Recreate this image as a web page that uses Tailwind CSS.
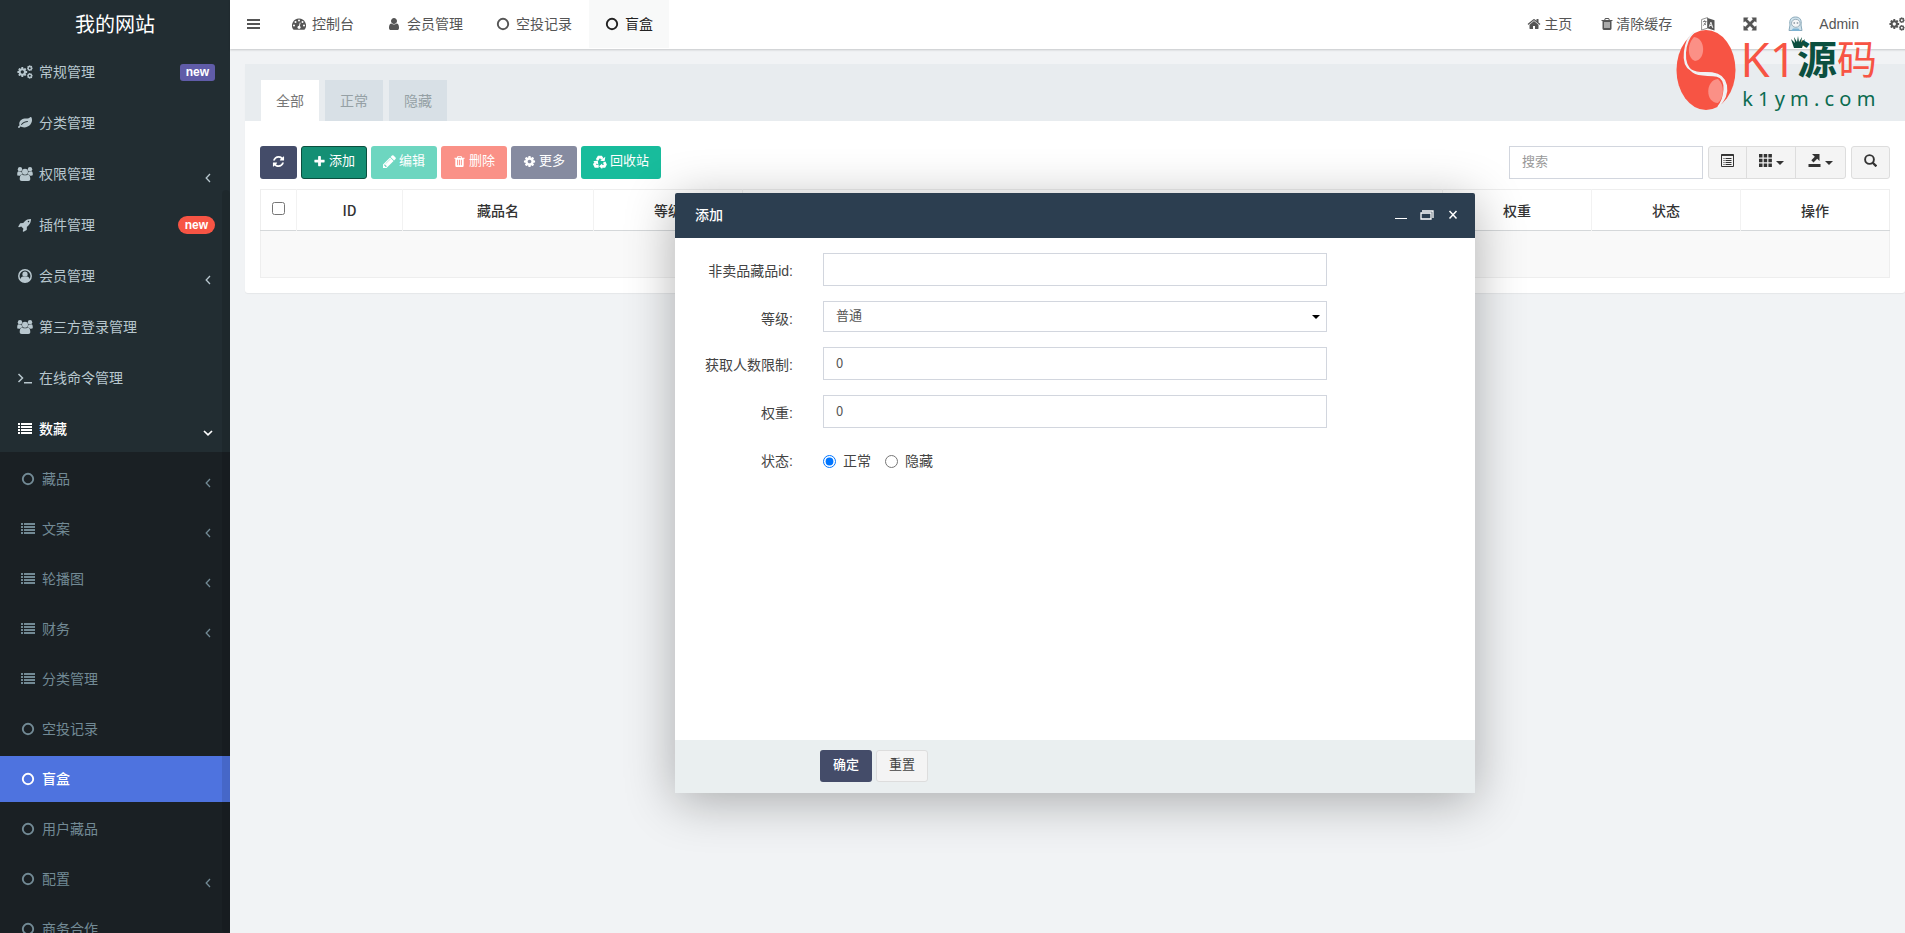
<!DOCTYPE html>
<html lang="zh-CN">
<head>
<meta charset="utf-8">
<title>我的网站</title>
<script src="https://cdn.jsdelivr.net/npm/@tailwindcss/browser@4"></script>
</head>
<body class="relative flex h-screen overflow-hidden bg-[#f1f3f5] font-['Liberation_Sans','Noto_Sans_CJK_SC',sans-serif] text-sm text-[#444]">

<svg class="hidden" aria-hidden="true">
  <symbol id="cog" viewBox="0 0 1792 1792"><path d="M1152 896q0-106-75-181t-181-75-181 75-75 181 75 181 181 75 181-75 75-181zm512-109v222q0 12-8 23t-20 13l-185 28q-19 54-39 91 35 50 107 138 10 12 10 25t-9 23q-27 37-99 108t-94 71q-12 0-26-9l-138-108q-44 23-91 38-16 136-29 186-7 28-36 28h-222q-14 0-24.5-8.5t-11.5-21.5l-28-184q-49-16-90-37l-141 107q-10 9-25 9-14 0-25-11-126-114-165-168-7-10-7-23 0-12 8-23 15-21 51-66.5t54-70.5q-27-50-41-99l-183-27q-13-2-21-12.5t-8-23.5v-222q0-12 8-23t19-13l186-28q14-46 39-92-40-57-107-138-10-12-10-24 0-10 9-23 26-36 98.5-107.5t94.5-71.5q13 0 26 10l138 107q44-23 91-38 16-136 29-186 7-28 36-28h222q14 0 24.5 8.5t11.5 21.5l28 184q49 16 90 37l142-107q9-9 24-9 13 0 25 10 129 119 165 170 7 8 7 22 0 12-8 23-15 21-51 66.5t-54 70.5q26 50 41 98l183 28q13 2 21 12.5t8 23.5z"/></symbol>
  <symbol id="cogs" viewBox="0 0 16 14"><use href="#cog" x="-.4" y="1.3" width="11.4" height="11.4"/><use href="#cog" x="9.4" y="-.2" width="6.8" height="6.8"/><use href="#cog" x="9.4" y="7.4" width="6.8" height="6.8"/></symbol>
  <symbol id="leaf" viewBox="0 0 1792 1792"><path d="M1280 704q0-26-19-45t-45-19q-172 0-318 49.5t-259.5 134-235.5 219.5q-19 21-19 45 0 26 19 45t45 19q24 0 45-19 27-24 74-71t67-66q137-124 268.5-176t313.5-52q26 0 45-19t19-45zm512-198q0 95-20 193-46 224-184.5 383t-357.5 268q-214 108-438 108-148 0-286-47-15-5-88-42t-96-37q-16 0-39.5 32t-45 70-52.5 70-60 32q-43 0-63.5-17.5t-45.5-59.5q-2-4-6-11t-5.5-10-3-9.5-1.5-13.5q0-35 31-73.5t68-65.5 68-56 31-48q0-4-14-38t-16-44q-9-51-9-104 0-115 43.5-220t119-184.5 170.5-139 204-95.5q55-18 145-25.5t179.5-9 178.5-6 163.5-24 113.5-56.5l29.5-29.5 29.5-28 27-20 36.5-16 43.5-4.5q39 0 70.5 46t47.5 112 24 124 8 96z"/></symbol>
  <symbol id="group" viewBox="0 0 16 14"><circle cx="3" cy="2.3" r="2.2"/><circle cx="13" cy="2.3" r="2.2"/><path d="M.2 7.6C.2 5.4.8 4.300 1.500 4.300c.9.5 2.200.6 3.100.2 0 1.200.3 2 .9 2.800-1.300.1-2.100.6-2.700 1.500H1.700C.8 8.800.2 8.400.2 7.600zM15.800 7.600c0-2.200-.6-3.300-1.300-3.300-.9.5-2.200.6-3.100.2 0 1.200-.3 2-.9 2.800 1.300.1 2.100.6 2.700 1.500h1.100c.9 0 1.500-.4 1.500-1.200z"/><circle cx="8" cy="4.800" r="3"/><path d="M2.700 12c0-2.800.9-4.600 2.500-4.600 1.700 1.200 3.900 1.200 5.600 0 1.600 0 2.500 1.800 2.500 4.600 0 1.300-.7 2-2 2H4.700c-1.300 0-2-.7-2-2z"/></symbol>
  <symbol id="rocket" viewBox="0 0 1792 1792"><path d="M1440 448q0-40-28-68t-68-28-68 28-28 68 28 68 68 28 68-28 28-68zm224-288q0 249-75.500 430.500t-253.500 360.500q-81 80-195 176l-20 379q-2 16-16 26l-384 224q-7 4-16 4-12 0-23-9l-64-64q-13-14-8-32l85-276-281-281-276 85q-3 1-9 1-14 0-23-9l-64-64q-17-19-5-39l224-384q10-14 26-16l379-20q96-114 176-195 188-187 358-258t431-71q14 0 24 9.500t10 22.500z"/></symbol>
  <symbol id="account" viewBox="0 0 14 14"><circle cx="7" cy="7" r="6.200" fill="none" stroke="currentColor" stroke-width="1.500"/><circle cx="7" cy="5.200" r="2.600"/><path d="M2 11.200c.5-2.500 1.500-3.600 3-3.800 1.200.8 2.800.8 4 0 1.500.2 2.500 1.300 3 3.800-3 2.600-7 2.600-10 0z"/></symbol>
  <symbol id="terminal" viewBox="0 0 16 14"><path d="M1.500 3l4 4-4 4M7 11.800h8" fill="none" stroke="currentColor" stroke-width="1.500"/></symbol>
  <symbol id="list" viewBox="0 0 14 12"><path d="M0 0h2v2H0zM3 0h11v2H3zM0 3h2v2H0zM3 3h11v2H3zM0 6h2v2H0zM3 6h11v2H3zM0 9h2v2H0zM3 9h11v2H3z"/></symbol>
  <symbol id="ring" viewBox="0 0 14 14"><circle cx="7" cy="7" r="5.200" fill="none" stroke="currentColor" stroke-width="1.900"/></symbol>
  <symbol id="left" viewBox="0 0 6 10"><path d="M5 1L1.200 5 5 9" fill="none" stroke="currentColor" stroke-width="1.300"/></symbol>
  <symbol id="down" viewBox="0 0 10 6"><path d="M1 1l4 3.800L9 1" fill="none" stroke="currentColor" stroke-width="1.700"/></symbol>
  <symbol id="trash" viewBox="0 0 1792 1792"><path d="M704 1376v-704q0-14-9-23t-23-9h-64q-14 0-23 9t-9 23v704q0 14 9 23t23 9h64q14 0 23-9t9-23zm256 0v-704q0-14-9-23t-23-9h-64q-14 0-23 9t-9 23v704q0 14 9 23t23 9h64q14 0 23-9t9-23zm256 0v-704q0-14-9-23t-23-9h-64q-14 0-23 9t-9 23v704q0 14 9 23t23 9h64q14 0 23-9t9-23zm-544-992h448l-48-117q-7-9-17-11h-317q-10 2-17 11zm928 32v64q0 14-9 23t-23 9h-96v948q0 83-47 143.500t-113 60.500h-832q-66 0-113-58.500t-47-141.500v-952h-96q-14 0-23-9t-9-23v-64q0-14 9-23t23-9h309l70-167q15-37 54-63t79-26h320q40 0 79 26t54 63l70 167h309q14 0 23 9t9 23z"/></symbol>
</svg>

<aside class="relative w-[230px] shrink-0 overflow-hidden bg-[#222d32] text-[#b8c7ce]">
  <a href="#" class="flex h-[49px] items-center justify-center text-xl text-white">我的网站</a>
  <nav>
    <ul class="flex flex-col gap-[5px]">
      <li><a href="#" class="flex h-[46px] items-center gap-[6px] pl-[17px] pr-[15px]"><svg class="h-[14px] w-4 fill-current"><use href="#cogs"/></svg>常规管理<span class="ml-auto rounded-[3px] bg-[#605ca8] px-[6px] text-xs leading-[17px] font-bold text-white">new</span></a></li>
      <li><a href="#" class="flex h-[46px] items-center gap-[6px] pl-[17px] pr-[15px]"><svg class="h-[14px] w-4 fill-current"><use href="#leaf"/></svg>分类管理</a></li>
      <li><a href="#" class="flex h-[46px] items-center gap-[6px] pl-[17px] pr-[19px]"><svg class="h-[14px] w-4 fill-current"><use href="#group"/></svg>权限管理<svg class="mt-2 ml-auto h-[10px] w-[6px]"><use href="#left"/></svg></a></li>
      <li><a href="#" class="flex h-[46px] items-center gap-[6px] pl-[17px] pr-[15px]"><svg class="h-[14px] w-4 fill-current"><use href="#rocket"/></svg>插件管理<span class="ml-auto rounded-full bg-[#f75444] px-[7px] text-xs leading-[18px] font-bold text-white">new</span></a></li>
      <li><a href="#" class="flex h-[46px] items-center gap-[6px] pl-[17px] pr-[19px]"><svg class="h-[14px] w-4 fill-current"><use href="#account"/></svg>会员管理<svg class="mt-2 ml-auto h-[10px] w-[6px]"><use href="#left"/></svg></a></li>
      <li><a href="#" class="flex h-[46px] items-center gap-[6px] pl-[17px]"><svg class="h-[14px] w-4 fill-current"><use href="#group"/></svg>第三方登录管理</a></li>
      <li><a href="#" class="flex h-[46px] items-center gap-[6px] pl-[17px]"><svg class="h-[14px] w-4"><use href="#terminal"/></svg>在线命令管理</a></li>
      <li>
        <a href="#" class="flex h-[46px] items-center gap-[6px] pl-[17px] pr-[17px] font-medium text-white"><svg class="h-[12px] w-4 fill-current"><use href="#list"/></svg>数藏<svg class="mt-2 ml-auto h-[6px] w-[10px]"><use href="#down"/></svg></a>
        <ul class="flex flex-col gap-1 bg-[#1a2024] pt-1 text-[#728a95]">
          <li><a href="#" class="flex h-[46px] items-center gap-[7px] pl-[21px] pr-[19px]"><svg class="size-[14px]"><use href="#ring"/></svg>藏品<svg class="mt-2 ml-auto h-[10px] w-[6px]"><use href="#left"/></svg></a></li>
          <li><a href="#" class="flex h-[46px] items-center gap-[7px] pl-[21px] pr-[19px]"><svg class="h-[12px] w-[14px] fill-current"><use href="#list"/></svg>文案<svg class="mt-2 ml-auto h-[10px] w-[6px]"><use href="#left"/></svg></a></li>
          <li><a href="#" class="flex h-[46px] items-center gap-[7px] pl-[21px] pr-[19px]"><svg class="h-[12px] w-[14px] fill-current"><use href="#list"/></svg>轮播图<svg class="mt-2 ml-auto h-[10px] w-[6px]"><use href="#left"/></svg></a></li>
          <li><a href="#" class="flex h-[46px] items-center gap-[7px] pl-[21px] pr-[19px]"><svg class="h-[12px] w-[14px] fill-current"><use href="#list"/></svg>财务<svg class="mt-2 ml-auto h-[10px] w-[6px]"><use href="#left"/></svg></a></li>
          <li><a href="#" class="flex h-[46px] items-center gap-[7px] pl-[21px]"><svg class="h-[12px] w-[14px] fill-current"><use href="#list"/></svg>分类管理</a></li>
          <li><a href="#" class="flex h-[46px] items-center gap-[7px] pl-[21px]"><svg class="size-[14px]"><use href="#ring"/></svg>空投记录</a></li>
          <li><a href="#" class="flex h-[46px] items-center gap-[7px] bg-[#4e73df] pl-[21px] font-medium text-white"><svg class="size-[14px]"><use href="#ring"/></svg>盲盒</a></li>
          <li><a href="#" class="flex h-[46px] items-center gap-[7px] pl-[21px]"><svg class="size-[14px]"><use href="#ring"/></svg>用户藏品</a></li>
          <li><a href="#" class="flex h-[46px] items-center gap-[7px] pl-[21px] pr-[19px]"><svg class="size-[14px]"><use href="#ring"/></svg>配置<svg class="mt-2 ml-auto h-[10px] w-[6px]"><use href="#left"/></svg></a></li>
          <li><a href="#" class="flex h-[46px] items-center gap-[7px] pl-[21px]"><svg class="size-[14px]"><use href="#ring"/></svg>商务合作</a></li>
        </ul>
      </li>
    </ul>
  </nav>
  <div class="absolute top-[190px] right-0 bottom-0 w-2 rounded bg-black/10"></div>
</aside>

<div class="relative -mr-[15px] flex min-w-0 flex-1 flex-col">
  <header class="flex h-[49px] shrink-0 bg-white pb-px text-[#555] shadow-[0_1px_2px_rgba(0,0,0,0.18)]">
    <button type="button" aria-label="菜单" class="flex w-[46px] items-center justify-center"><svg class="h-[10px] w-[13px] fill-current"><path d="M0 0h13v2H0zM0 4h13v2H0zM0 8h13v2H0z"/></svg></button>
    <nav class="flex gap-px">
      <a href="#" class="flex items-center gap-[6px] px-4"><svg class="size-[14px] fill-current" viewBox="0 0 14 14"><path fill-rule="evenodd" d="M7 1.500a7 7 0 0 0-5.900 10.800c.2.300.4.400.8.400h10.200c.4 0 .6-.1.8-.4A7 7 0 0 0 7 1.500zM2 7.500a1 1 0 1 1 0 2 1 1 0 0 1 0-2zM3.500 4a1 1 0 1 1 0 2 1 1 0 0 1 0-2zM7 2.500a1 1 0 1 1 0 2 1 1 0 0 1 0-2zM10.500 4a1 1 0 1 1 0 2 1 1 0 0 1 0-2zM12 7.500a1 1 0 1 1 0 2 1 1 0 0 1 0-2zM7.800 5.500l.8.200-.8 3.200a1.600 1.600 0 1 1-.8-.2z"/></svg>控制台</a>
      <a href="#" class="flex items-center gap-[6px] px-4"><svg class="size-[14px] fill-current" viewBox="0 0 1792 1792"><path d="M1536 1399q0 109-62.500 187t-150.500 78h-854q-88 0-150.500-78t-62.500-187q0-85 8.500-160.500t31.500-152 58.500-131 94-89 134.500-34.500q131 128 313 128t313-128q76 0 134.500 34.500t94 89 58.500 131 31.500 152 8.500 160.500zm-256-887q0 159-112.500 271.500t-271.500 112.500-271.500-112.500-112.500-271.500 112.500-271.500 271.500-112.500 271.500 112.500 112.500 271.500z"/></svg>会员管理</a>
      <a href="#" class="flex items-center gap-[6px] px-4"><svg class="size-[14px]"><use href="#ring"/></svg>空投记录</a>
      <a href="#" class="flex items-center gap-[6px] bg-[#f8f9f9] px-4 text-[#222]"><svg class="size-[14px]"><use href="#ring"/></svg>盲盒</a>
    </nav>
    <nav class="ml-auto flex">
      <a href="#" class="flex items-center gap-[3px] px-[14px]"><svg class="size-[14px] fill-current" viewBox="0 0 1792 1792"><path d="M1472 992v480q0 26-19 45t-45 19h-384v-384h-256v384h-384q-26 0-45-19t-19-45v-480q0-1 .5-3t.5-3l575-474 575 474q1 2 1 6zm223-69l-62 74q-8 9-21 11h-3q-13 0-21-7l-692-577-692 577q-12 8-24 7-13-2-21-11l-62-74q-8-10-7-23.500t11-21.500l719-599q32-26 76-26t76 26l244 204v-195q0-14 9-23t23-9h192q14 0 23 9t9 23v408l219 182q10 8 11 21.500t-7 23.500z"/></svg>主页</a>
      <a href="#" class="flex items-center gap-[2px] px-[14px]"><svg class="size-[14px] fill-current"><use href="#trash"/></svg>清除缓存</a>
      <a href="#" aria-label="语言" class="flex items-center px-[15px]"><svg class="size-[14px]" viewBox="0 0 14 14"><path d="M.6 2.500L6.500.600v10.600L.600 13z" fill="#fff" stroke="#777" stroke-width=".8"/><path d="M2 4.500h3.500M3.700 3.200v1.300M2.200 8.500c1.500-1 2.400-2.200 2.700-4M2.800 6l2.200 2" fill="none" stroke="#666" stroke-width=".8"/><path d="M6.500 1l7 2.200v10.300l-7-2.300z" fill="#555"/><path d="M8.200 9.800l1.700-4.600 1.900 5.700M8.900 8.300l2.100.6" fill="none" stroke="#fff" stroke-width=".9"/></svg></a>
      <a href="#" aria-label="全屏" class="flex items-center px-[13px]"><svg class="size-[14px] fill-current" viewBox="0 0 14 14"><path d="M.5.500h5L4.200 2.300 7 5l2.800-2.700L8.500.500h5v5l-1.800-1.300L9 7l2.700 2.800 1.800-1.300v5h-5l1.300-1.800L7 9l-2.800 2.700 1.300 1.800h-5v-5l1.800 1.300L5 7 2.300 4.200.500 5.500z"/></svg></a>
      <a href="#" class="flex items-center gap-4 pr-[15px] pl-[18px]"><svg class="h-[16px] w-[15px]" viewBox="0 0 15 16"><path d="M2 9C1 4 3 1 7.500 1S14 4 13 9l1 5.500H1z" fill="#cfe2ec" stroke="#8aa9ba"/><ellipse cx="7.800" cy="7.300" rx="4.300" ry="4" fill="#f4f6f7" stroke="#8fa6b3" stroke-width=".9"/><path d="M5.500 7h1.500M8.700 7h1.500" stroke="#567" stroke-width="1.200"/><path d="M3 15l2-2.500h5.500L12.500 15z" fill="#7db3d3"/></svg>Admin</a>
      <a href="#" aria-label="设置" class="flex items-center px-[15px]"><svg class="h-[14px] w-4 fill-current"><use href="#cogs"/></svg></a>
    </nav>
  </header>

  <main class="px-[15px] pt-[15px]">
    <section class="rounded-[3px] bg-white shadow-[0_1px_1px_rgba(0,0,0,0.05)]">
      <div class="flex h-[57px] items-end gap-[6px] bg-[#e8ecef] px-4" role="tablist">
        <button type="button" role="tab" class="h-[41px] bg-white px-[15px] text-[#777]">全部</button>
        <button type="button" role="tab" class="h-[41px] bg-[#d8e0e6] px-[15px] text-[#95a0a5]">正常</button>
        <button type="button" role="tab" class="h-[41px] bg-[#d8e0e6] px-[15px] text-[#95a0a5]">隐藏</button>
      </div>
      <div class="px-[15px] pt-[25px] pb-[15px]">
        <div class="flex h-[33px] gap-1 text-[13px] text-white">
          <button type="button" aria-label="刷新" class="flex w-[37px] items-center justify-center rounded-[3px] bg-[#444c69] pb-[2px]"><svg class="size-[13px] fill-current" viewBox="0 0 1792 1792"><path d="M1639 1056q0 5-1 7-64 268-268 434.500t-478 166.500q-146 0-282.500-55t-243.500-157l-129 129q-19 19-45 19t-45-19-19-45v-448q0-26 19-45t45-19h448q26 0 45 19t19 45-19 45l-137 137q71 66 161 102t187 36q134 0 250-65t186-179q11-17 53-117 8-23 30-23h192q13 0 22.500 9.500t9.500 22.500zm25-800v448q0 26-19 45t-45 19h-448q-26 0-45-19t-19-45 19-45l138-138q-148-137-349-137-134 0-250 65t-186 179q-11 17-53 117-8 23-30 23h-199q-13 0-22.500-9.500t-9.500-22.500v-7q65-268 270-434.500t480-166.500q146 0 284 55.500t245 156.500l130-129q19-19 45-19t45 19 19 45z"/></svg></button>
          <button type="button" class="flex items-center gap-[3px] rounded-[3px] border border-[#0b4f3f] bg-[#148f74] px-[11px] pb-[2px]"><svg class="size-[13px] fill-current" viewBox="0 0 1792 1792"><path d="M1600 736v192q0 40-28 68t-68 28h-416v416q0 40-28 68t-68 28h-192q-40 0-68-28t-28-68v-416h-416q-40 0-68-28t-28-68v-192q0-40 28-68t68-28h416v-416q0-40 28-68t68-28h192q40 0 68 28t28 68v416h416q40 0 68 28t28 68z"/></svg>添加</button>
          <button type="button" class="flex items-center gap-[3px] rounded-[3px] bg-[#6dd6c0] px-3 pb-[2px]"><svg class="size-[13px] fill-current" viewBox="128 128 1536 1536"><path d="M491 1536l91-91-235-235-91 91v107h128v128h107zm523-928q0-22-22-22-10 0-17 7l-542 542q-7 7-7 17 0 22 22 22 10 0 17-7l542-542q7-7 7-17zm-54-192l416 416-832 832h-416v-416zm683 96q0 53-37 90l-166 166-416-416 166-165q36-38 90-38 53 0 91 38l235 234q37 39 37 91z"/></svg>编辑</button>
          <button type="button" class="flex items-center gap-[3px] rounded-[3px] bg-[#fa9187] px-3 pb-[2px]"><svg class="size-[13px] fill-current"><use href="#trash"/></svg>删除</button>
          <button type="button" class="flex items-center gap-[3px] rounded-[3px] bg-[#868ba0] px-3 pb-[2px]"><svg class="size-[13px] fill-current"><use href="#cog"/></svg>更多</button>
          <button type="button" class="flex items-center gap-[3px] rounded-[3px] bg-[#18bc9c] px-3 pb-[2px]"><svg class="size-[14px]" viewBox="0 0 14 14" fill="none" stroke="currentColor" stroke-width="2.800"><path d="M4 5L5.700 2.200h2.400l1.200 1.900M11.200 7.200l1.100 2.200-1 2H9M5.700 11.400H2.600l-1-2L2.600 7.800"/><path stroke="none" fill="currentColor" d="M7.200 5.800L11.600 6.200l.7-4.400zM9.200 8.400v5.600L6 11.300zM.2 6.200l4.600-.8.600 4.600z"/></svg>回收站</button>
          <div class="ml-auto flex gap-[5px] text-[#333]">
            <input type="search" aria-label="搜索" placeholder="搜索" class="w-[194px] border border-[#d2d6de] bg-white px-3 text-[13px] outline-none placeholder:text-[#999]">
            <div class="flex divide-x divide-[#ddd] rounded-[3px] border border-[#ddd] bg-[#f4f4f4]">
              <button type="button" aria-label="切换" class="flex w-[38px] items-center justify-center pb-1"><svg class="size-[13px]" viewBox="0 0 13 13" fill="none" stroke="currentColor"><path d="M.5.500h12v12H.500z"/><path d="M.5 1.200h12" stroke-width="1.500"/><path d="M2.500 4.500h1M4.500 4.500h6M2.500 6.500h1M4.500 6.500h6M2.500 8.500h1M4.500 8.500h6M2.500 10.500h1M4.500 10.500h6"/></svg></button>
              <button type="button" aria-label="列" class="flex w-[49px] items-center justify-center gap-1 pb-1"><svg class="size-[13px] fill-current" viewBox="0 0 13 13"><path d="M0 0h3.500v3.500H0zM4.700 0h3.500v3.500H4.700zM9.400 0h3.500v3.500H9.400zM0 4.700h3.500v3.500H0zM4.700 4.700h3.500v3.500H4.700zM9.400 4.700h3.500v3.500H9.400zM0 9.400h3.500v3.500H0zM4.700 9.400h3.500v3.500H4.700zM9.400 9.400h3.500v3.500H9.400z"/></svg><svg class="mt-1 h-1 w-2 fill-current" viewBox="0 0 8 4"><path d="M0 0h8L4 4z"/></svg></button>
              <button type="button" aria-label="导出" class="flex w-[49px] items-center justify-center gap-1 pb-1"><svg class="size-[13px] fill-current" viewBox="0 0 13 13"><path d="M4 0h7.500v7L9.200 4.800 5.500 8.500 3.300 6.300 6.800 2.700zM.5 10h12v3H.5z"/></svg><svg class="mt-1 h-1 w-2 fill-current" viewBox="0 0 8 4"><path d="M0 0h8L4 4z"/></svg></button>
            </div>
            <button type="button" aria-label="高级搜索" class="flex w-[39px] items-center justify-center rounded-[3px] border border-[#ddd] bg-[#f4f4f4] pb-1"><svg class="size-[13px]" viewBox="0 0 13 13" fill="none" stroke="currentColor" stroke-width="1.900"><circle cx="5.500" cy="5.500" r="4.400"/><path d="M8.700 8.700l3.700 3.700" stroke-width="2.300"/></svg></button>
          </div>
        </div>
        <table class="mt-[10px] w-full table-fixed border-collapse border border-[#eee] text-center font-['Noto_Sans_CJK_SC',sans-serif] leading-5 text-[#333]">
          <colgroup><col class="w-[36px]"><col class="w-[106px]"><col class="w-[191px]"><col class="w-[149px]"><col><col class="w-[149px]"><col class="w-[149px]"><col class="w-[149px]"></colgroup>
          <thead>
            <tr class="h-[41px] border-b border-[#d5d8da]">
              <th class="border-r border-[#f2f2f2]"><input type="checkbox" aria-label="全选" class="mx-auto mb-1 block size-[13px]"></th>
              <th class="border-r border-[#f2f2f2] font-medium">ID</th>
              <th class="border-r border-[#f2f2f2] font-medium">藏品名</th>
              <th class="border-r border-[#f2f2f2] font-medium">等级</th>
              <th class="border-r border-[#f2f2f2]"></th>
              <th class="border-r border-[#f2f2f2] font-medium">权重</th>
              <th class="border-r border-[#f2f2f2] font-medium">状态</th>
              <th class="font-medium">操作</th>
            </tr>
          </thead>
          <tbody><tr class="h-[47px] bg-[#f9f9f9]"><td colspan="8"></td></tr></tbody>
        </table>
      </div>
    </section>
  </main>

  <section role="dialog" aria-labelledby="dialog-title" class="absolute top-[193px] left-1/2 flex h-[600px] w-[800px] -translate-x-1/2 flex-col rounded-[2px] bg-white shadow-[0_8px_50px_rgba(0,0,0,0.3)]">
    <div class="flex h-[45px] items-center rounded-t-[2px] bg-[#2c3e50] pr-4 pb-px pl-5 text-white">
      <h2 id="dialog-title" class="font-medium">添加</h2>
      <div class="ml-auto flex items-center gap-[13px]">
        <button type="button" aria-label="最小化"><svg class="h-[12px] w-[12px]" viewBox="0 0 12 12"><path d="M0 9.500h12" stroke="currentColor"/></svg></button>
        <button type="button" aria-label="最大化"><svg class="h-[12px] w-[14px]" viewBox="0 0 14 12" fill="none" stroke="currentColor"><path d="M1 4h10v6H1z" stroke-width="1.300"/><path d="M2 2h11v7" stroke-width="1.300"/></svg></button>
        <button type="button" aria-label="关闭"><svg class="h-[12px] w-[12px]" viewBox="0 0 12 12"><path d="M2.500 2l7 7.500M9.500 2l-7 7.500" stroke="currentColor" stroke-width="1.500"/></svg></button>
      </div>
    </div>
    <form id="add" class="flex flex-1 flex-col gap-[15px] px-[15px] pt-[15px]">
      <div class="flex gap-[30px]"><label for="goods" class="w-[103px] pt-2 text-right leading-5">非卖品藏品id:</label><input id="goods" type="text" class="h-[33px] w-[504px] border border-[#d2d6de] px-3 text-[13px]"></div>
      <div class="flex gap-[30px]"><label for="level" class="w-[103px] pt-2 text-right leading-5">等级:</label>
        <div class="relative w-[504px]"><select id="level" class="h-[31px] w-full appearance-none border border-[#d2d6de] bg-white px-3 text-[13px] text-[#555]"><option>普通</option></select><svg class="pointer-events-none absolute top-[14px] right-[7px] h-1 w-2" viewBox="0 0 8 4"><path d="M0 0h8L4 4z"/></svg></div></div>
      <div class="flex gap-[30px]"><label for="limit" class="w-[103px] pt-2 text-right leading-5">获取人数限制:</label><input id="limit" type="text" value="0" class="h-[33px] w-[504px] border border-[#d2d6de] px-3 pb-[2px] font-['Noto_Sans_CJK_SC',sans-serif] text-[13px] text-[#555]"></div>
      <div class="flex gap-[30px]"><label for="weight" class="w-[103px] pt-2 text-right leading-5">权重:</label><input id="weight" type="text" value="0" class="h-[33px] w-[504px] border border-[#d2d6de] px-3 pb-[2px] font-['Noto_Sans_CJK_SC',sans-serif] text-[13px] text-[#555]"></div>
      <div class="flex items-center gap-[30px] pt-2 leading-5" role="radiogroup" aria-label="状态"><span class="w-[103px] text-right">状态:</span>
        <div class="flex gap-[14px]"><label class="flex items-center gap-[7px]"><input type="radio" name="status" checked class="size-[13px]">正常</label><label class="flex items-center gap-[7px]"><input type="radio" name="status" class="size-[13px]">隐藏</label></div></div>
    </form>
    <div class="flex h-[53px] gap-1 bg-[#eaeff0] pt-[10px] pl-[145px] text-[13px]">
      <button type="submit" form="add" class="h-8 w-[52px] rounded-[3px] bg-[#444c69] pb-px font-medium text-white">确定</button>
      <button type="reset" form="add" class="h-8 w-[52px] rounded-[3px] border border-[#ddd] bg-[#f4f4f4] pb-px text-[#444]">重置</button>
    </div>
  </section>
</div>

<a href="#" class="absolute top-[30px] right-[28px] flex gap-1">
  <svg class="h-20 w-[60px]" viewBox="0 0 60 80"><ellipse cx="30" cy="40" rx="29.500" ry="40" fill="#f75444"/><path d="M18 7c12 1 12 23 1 24-8-3-8-17-1-24z" fill="#fb9086"/><path d="M42 49c-13 1-13 24 0 24 6-5 7-18 0-24z" fill="#fb9086"/><path d="M18 2C8 10 4 34 15 40c6 4 14 2 21 3 16 2 20 20 6 34 7-9 10-28-1-31-8-2-17 1-24-4C5 34 8 12 18 2z" fill="#f0f2f4" stroke="#f0f2f4" stroke-width="1.500"/></svg>
  <span class="flex flex-col">
    <span class="flex h-[57px] items-center font-['Open_Sans','Noto_Sans_CJK_SC',sans-serif] text-[40px] leading-[48px] text-[#f75444]"><span class="relative flex items-center"><span class="text-5xl leading-[48px]">K1</span><svg class="absolute top-0 -right-[9px] h-[15px] w-4" viewBox="0 0 16 15"><path d="M1 4l4 4-1-6 3 5 1-6 1 6 3-5-1 6 4-4-3 9H4z" fill="#0b4f3f"/></svg></span><span class="font-bold text-[#0b4f3f]">源</span><span>码</span></span>
    <span class="pl-[2px] font-['Noto_Sans',sans-serif] text-xl leading-6 text-[#0b6b50]">k 1 y m . c o m</span>
  </span>
</a>
</body>
</html>
